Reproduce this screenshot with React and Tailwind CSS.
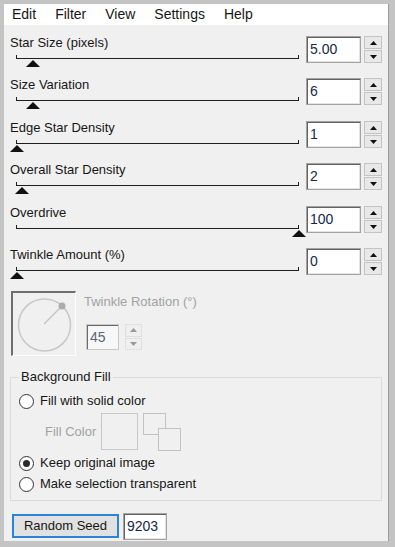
import React from 'react'

const menus = ['Edit', 'Filter', 'View', 'Settings', 'Help']

const sliders = [
  { label: 'Star Size (pixels)', value: '5.00', thumb: 17 },
  { label: 'Size Variation', value: '6', thumb: 17 },
  { label: 'Edge Star Density', value: '1', thumb: 1 },
  { label: 'Overall Star Density', value: '2', thumb: 6 },
  { label: 'Overdrive', value: '100', thumb: 283 },
  { label: 'Twinkle Amount (%)', value: '0', thumb: 1 },
]

const Arrow = ({ up, color = '#111' }) => (
  <svg width="7" height="4" viewBox="0 0 7 4">
    <polygon points={up ? '0,4 3.5,0 7,4' : '0,0 3.5,4 7,0'} fill={color} />
  </svg>
)

const Spinner = ({ disabled }) => (
  <div className="flex flex-col gap-[1px] w-[18px] h-[27px]">
    {[true, false].map((up) => (
      <div
        key={up ? 'u' : 'd'}
        className={
          disabled
            ? 'flex-1 flex items-center justify-center border border-[#dedede] bg-[#efefef]'
            : 'flex-1 flex items-center justify-center border border-[#c4c4c4] bg-[#e8e8e8]'
        }
      >
        <Arrow up={up} color={disabled ? '#9a9a9a' : '#111'} />
      </div>
    ))}
  </div>
)

const NumBox = ({ value, className }) => (
  <div
    className={
      'flex items-center pl-[3px] bg-white border border-[#a3a3a3] shadow-[inset_1px_1px_0_#646464,inset_-1px_-1px_0_#e4e4e4] text-[14px] text-[#14284a] ' +
      className
    }
  >
    {value}
  </div>
)

const SliderRow = ({ s, i }) => (
  <div className={i % 2 ? 'flex items-start h-[43px]' : 'flex items-start h-[42px]'}>
    <div className="w-[296px] flex flex-col">
      <div className="text-[13px] leading-[16px] h-[16px] text-[#161616]">{s.label}</div>
      <div className="relative ml-[6px] mt-[4px] w-[283px] h-[12px]">
        <div className="h-[4px] border-l border-r border-b border-[#1e1e1e]" />
        <svg
          className="absolute top-[5px]"
          style={{ left: s.thumb - 7 }}
          width="14"
          height="7"
          viewBox="0 0 14 7"
        >
          <polygon points="0,7 7,0 14,7" fill="#111" />
        </svg>
      </div>
    </div>
    <NumBox value={s.value} className="mt-[1px] w-[55px] h-[27px]" />
    <div className="mt-[1px] ml-[3px]">
      <Spinner />
    </div>
  </div>
)

const Radio = ({ checked, label }) => (
  <div className="flex items-center h-[16px] pl-[8px] gap-[6px]">
    <div className="w-[15px] h-[15px] rounded-full border border-[#333] bg-white flex items-center justify-center">
      {checked && <div className="w-[7px] h-[7px] rounded-full bg-[#2b2b2b]" />}
    </div>
    <span className="text-[13px] leading-[16px] text-[#161616]">{label}</span>
  </div>
)

export default function App() {
  return (
    <div className="w-[395px] h-[547px] bg-[#c4c4c4] pl-[4px] pt-[4px] pr-[6px] pb-[6px] font-['Liberation_Sans',Arial,sans-serif]">
      <div className="h-full flex flex-col bg-[#f0f0f0] border-r border-[#9c9c9c]">
        <div className="h-[21px] bg-white flex items-center pl-[8px] gap-[19px] text-[14px] text-[#161616]">
          {menus.map((m) => (
            <span key={m}>{m}</span>
          ))}
        </div>

        <div className="flex flex-col pl-[6px] pt-[10px]">
          {sliders.map((s, i) => (
            <SliderRow key={s.label} s={s} i={i} />
          ))}

          <div className="flex mt-[1px]">
            <div className="ml-[1px] w-[65px] h-[65px] border-t-2 border-l-2 border-[#6e6e6e] border-r border-b border-r-[#fdfdfd] border-b-[#fdfdfd]">
              <svg width="63" height="63" viewBox="2 2 63 63">
                <circle cx="33.5" cy="34" r="26" fill="none" stroke="#c8c8c8" strokeWidth="1.5" />
                <line x1="33" y1="33" x2="51" y2="15" stroke="#c4c4c4" strokeWidth="1.5" />
                <circle cx="51" cy="15" r="3.5" fill="#acacac" />
              </svg>
            </div>
            <div className="ml-[8px] flex flex-col">
              <div className="mt-[3px] text-[13px] leading-[16px] text-[#a2a2a2]">Twinkle Rotation (°)</div>
              <div className="flex mt-[14px] ml-[2px]">
                <div className="w-[33px] h-[26px] flex items-center pl-[3px] bg-[#f7f7f7] border border-[#c9c9c9] shadow-[inset_1px_1px_0_#6a6a6a] text-[14px] text-[#5b6478]">
                  45
                </div>
                <div className="ml-[6px] h-[26px] flex flex-col gap-[1px] w-[17px]">
                  <div className="flex-1 flex items-center justify-center border border-[#e0e0e0] bg-[#efefef]">
                    <Arrow up color="#9a9a9a" />
                  </div>
                  <div className="flex-1 flex items-center justify-center border border-[#e0e0e0] bg-[#efefef]">
                    <Arrow color="#9a9a9a" />
                  </div>
                </div>
              </div>
            </div>
          </div>

          <fieldset className="mt-[13px] w-[372px] border border-[#dcdcdc] pt-[8px] pb-[8px]">
            <legend className="ml-[8px] px-[2px] text-[13px] leading-[16px] text-[#161616]">
              Background Fill
            </legend>
            <Radio label="Fill with solid color" />
            <div className="flex items-center mt-[4px] h-[37px] pl-[34px]">
              <span className="w-[56px] text-[13px] text-[#a2a2a2]">Fill Color</span>
              <div className="w-[37px] h-[37px] border border-[#c8c8c8]" />
              <svg className="ml-[5px]" width="38" height="38" viewBox="0 0 38 38">
                <rect x="0.5" y="0.5" width="22" height="21" fill="#f0f0f0" stroke="#c2c2c2" />
                <rect x="15.5" y="15.5" width="22" height="22" fill="#f0f0f0" stroke="#c2c2c2" />
              </svg>
            </div>
            <div className="mt-[5px]">
              <Radio checked label="Keep original image" />
            </div>
            <div className="mt-[5px]">
              <Radio label="Make selection transparent" />
            </div>
          </fieldset>

          <div className="flex items-start mt-[13px] ml-[2px]">
            <div className="w-[107px] h-[24px] flex items-center justify-center border-2 border-[#2c84d8] bg-[#e1e1e1] text-[13px] text-[#161616]">
              Random Seed
            </div>
            <NumBox value="9203" className="ml-[4px] -mt-[1px] w-[44px] h-[27px]" />
          </div>
        </div>
      </div>
    </div>
  )
}
